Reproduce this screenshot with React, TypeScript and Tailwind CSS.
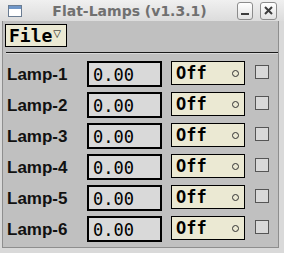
import React from "react";

const lamps = [1, 2, 3, 4, 5, 6];

const App: React.FC = () => {
  return (
    <div className="w-[284px] h-[253px] bg-[#d9d9d9] flex flex-col overflow-hidden font-['DejaVu_Sans',sans-serif]">
      {/* title bar */}
      <div className="h-[23px] flex items-center bg-gradient-to-b from-[#f0f0f0] to-[#dcdcdc]">
        <div className="ml-[8px] w-[14px] h-[12px] border border-[#6a7c92] bg-white flex flex-col">
          <div className="h-[3px] bg-[#6f96c8]" />
        </div>
        <div className="flex-1 text-center text-[14px] font-bold text-[#707070] leading-none">
          Flat-Lamps (v1.3.1)
        </div>
        <div className="flex gap-[7px] mr-[7px]">
          <div className="w-[16px] h-[18px] rounded-[3px] border border-[#8c8c8c] bg-gradient-to-b from-white to-[#e2e2e2] flex items-end justify-center pb-[4px]">
            <div className="w-[8px] h-[2px] bg-[#3c3c3c]" />
          </div>
          <div className="w-[17px] h-[18px] rounded-[3px] border border-[#8c8c8c] bg-gradient-to-b from-white to-[#e2e2e2] flex items-center justify-center">
            <svg width="9" height="9" viewBox="0 0 9 9">
              <path d="M1 1 L8 8 M8 1 L1 8" stroke="#3c3c3c" strokeWidth="2" />
            </svg>
          </div>
        </div>
      </div>

      {/* client area */}
      <div className="flex-1 flex pl-[2px] pr-[5px] pb-[5px]">
        <div className="flex-1 bg-[#c0c0c0] border-l border-[#8e8e8e] border-r border-b flex flex-col">
          {/* menu */}
          <div className="pt-[3px] pl-[2px]">
            <div className="w-[62px] h-[23px] border border-black bg-[#ebe9d3] flex items-center pl-[3px]">
              <span className="font-['DejaVu_Sans_Mono',monospace] font-bold text-[18px] leading-none text-black">
                File
              </span>
              <span className="text-[10px] leading-none text-black ml-[1px] -mt-[3px]">▽</span>
            </div>
          </div>
          <div className="mt-[5px] ml-[3px] h-[1px] bg-[#1a1a1a]" />
          <div className="h-[1px] ml-[3px] bg-[#d8d8d8]" />

          {/* rows */}
          <div className="mt-[7px] flex flex-col">
            {lamps.map((n) => (
              <div key={n} className="h-[31px] flex items-start">
                <div className="w-[84px] h-[26px] pl-[4px] flex items-center font-['Liberation_Sans',sans-serif] text-[17px] font-bold text-[#111] leading-none">
                  Lamp-{n}
                </div>
                <div className="w-[75px] h-[26px] border-2 border-black bg-[#d9d9d9] flex items-center pl-[4px]">
                  <span className="font-['DejaVu_Sans_Mono',monospace] text-[17px] leading-none text-black mt-[2px]">
                    0.00
                  </span>
                </div>
                <div className="ml-[9px] w-[74px] h-[24px] border border-black bg-[#ebe9d3] flex items-center pl-[4px] pr-[5px]">
                  <span className="flex-1 font-['DejaVu_Sans_Mono',monospace] font-bold text-[17px] leading-none text-black">
                    Off
                  </span>
                  <div className="w-[7px] h-[7px] rounded-full border border-[#333]" />
                </div>
                <div className="ml-[10px] mt-[4px] w-[14px] h-[14px] border border-[#555] bg-[#d9d9d9]" />
              </div>
            ))}
          </div>
        </div>
      </div>
    </div>
  );
};

export default App;
